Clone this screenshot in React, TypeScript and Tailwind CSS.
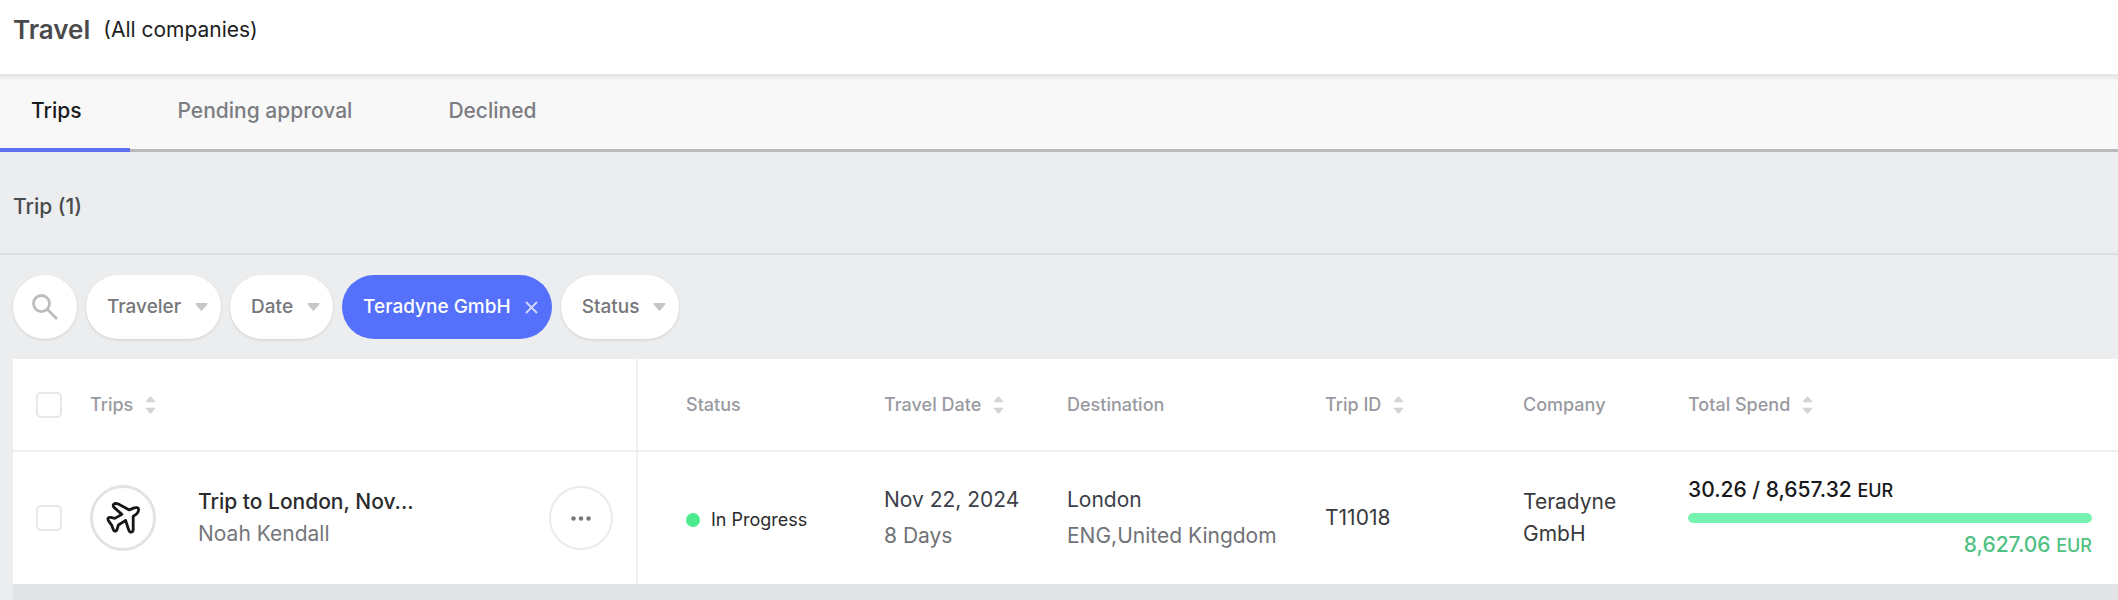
import { useState } from "react"
import type { ReactNode } from "react"
import clsx from "clsx"

interface Trip {
  id: string
  title: string
  traveler: string
  status: string
  date: string
  duration: string
  city: string
  region: string
  company: string
  spent: string
  budget: string
  remaining: string
  currency: string
  remainingPercent: number
}

const tabs = ["Trips", "Pending approval", "Declined"]

const columns = [
  { label: "Status", sortable: false },
  { label: "Travel Date", sortable: true },
  { label: "Destination", sortable: false },
  { label: "Trip ID", sortable: true },
  { label: "Company", sortable: false },
  { label: "Total Spend", sortable: true },
]

const trips: Trip[] = [
  {
    id: "T11018",
    title: "Trip to London, Nov...",
    traveler: "Noah Kendall",
    status: "In Progress",
    date: "Nov 22, 2024",
    duration: "8 Days",
    city: "London",
    region: "ENG,United Kingdom",
    company: "Teradyne GmbH",
    spent: "30.26",
    budget: "8,657.32",
    remaining: "8,627.06",
    currency: "EUR",
    remainingPercent: 100,
  },
]

function SortIcon() {
  return (
    <svg width="11" height="20" viewBox="0 0 12 20" fill="#d3d4d6" aria-hidden="true">
      <path d="M5 1.2a1.3 1.3 0 0 1 2 0l3.8 4.4c.5.6.1 1.4-.7 1.4H1.9c-.8 0-1.2-.8-.7-1.4z" />
      <path d="M5 18.8a1.3 1.3 0 0 0 2 0l3.8-4.4c.5-.6.1-1.4-.7-1.4H1.9c-.8 0-1.2.8-.7 1.4z" />
    </svg>
  )
}

function PlaneIcon() {
  return (
    <svg
      width="34"
      height="34"
      viewBox="0 0 34 34"
      fill="none"
      stroke="#161616"
      strokeWidth="2.8"
      strokeLinejoin="round"
      strokeLinecap="round"
      aria-hidden="true"
    >
      <path d="M12.3 3 23.3 8.9 28.2 6.9C30.6 6.2 32.6 6.4 32.6 8.4C32.6 11 30.6 13.4 27.2 15.2L27.2 28.4C27.2 31.6 23.6 32 22.8 29.2L19.6 19.4 12.4 24 10.9 28.8C10.2 30.8 8 30.6 7.4 28.8L5.8 24.4 2.4 19.6C1.2 17.4 2.4 16 4.6 16.4L8.8 17.4 15.9 13.4 8 6.4C5.8 4.2 8.2 1.4 12.3 3z" />
    </svg>
  )
}

function FilterChip({ children }: { children: ReactNode }) {
  return (
    <button
      type="button"
      className="flex h-16 items-center gap-[14px] rounded-full bg-white pr-[13px] pl-[21px] font-medium text-[#76777a] shadow-[0_1px_3px_rgba(0,0,0,0.12)]"
    >
      {children}
      <svg width="13" height="8" viewBox="0 0 14 9" fill="#c5c6c8" aria-hidden="true">
        <path d="M1.2 0h11.6c.9 0 1.3 1 .7 1.7L8 8.1a1.3 1.3 0 0 1-2 0L.5 1.7C-.1 1 .3 0 1.2 0z" />
      </svg>
    </button>
  )
}

function Checkbox({ label }: { label: string }) {
  return (
    <input
      type="checkbox"
      aria-label={label}
      className="size-[26px] shrink-0 appearance-none rounded-[5px] border-2 border-[#e6e7e8] bg-white checked:bg-[#5770ff]"
    />
  )
}

function TripRow({ trip }: { trip: Trip }) {
  return (
    <tr className="h-[133px] bg-white">
      <td className="border-r-2 border-[#efeff0]">
        <div className="flex items-center px-[23px]">
          <Checkbox label={`Select ${trip.title}`} />
          <span className="ml-7 flex size-[66px] shrink-0 items-center justify-center rounded-full border-3 border-[#e3e3e4]">
            <PlaneIcon />
          </span>
          <div className="ml-[42px] flex-1 leading-8">
            <p className="font-medium text-[#2b2b2d]">{trip.title}</p>
            <p className="text-[#76777b]">{trip.traveler}</p>
          </div>
          <button
            type="button"
            aria-label="More actions"
            className="flex size-16 items-center justify-center rounded-full border-2 border-[#ebebec]"
          >
            <svg width="20" height="5" viewBox="0 0 20 5" fill="#76777a" aria-hidden="true">
              <circle cx="2.5" cy="2.5" r="2.2" />
              <circle cx="10" cy="2.5" r="2.2" />
              <circle cx="17.5" cy="2.5" r="2.2" />
            </svg>
          </button>
        </div>
      </td>
      <td className="pl-12">
        <div className="flex items-center gap-[11px] pt-1 text-lg text-[#2b2b2d]">
          <span className="size-[14px] rounded-full bg-[#4cec8c]" />
          {trip.status}
        </div>
      </td>
      <td className="pl-12 leading-9 whitespace-nowrap">
        <p className="text-[#3c3f4a]">{trip.date}</p>
        <p className="text-[#707276]">{trip.duration}</p>
      </td>
      <td className="pl-12 leading-9 whitespace-nowrap">
        <p className="text-[#3c3f4a]">{trip.city}</p>
        <p className="text-[#707276]">{trip.region}</p>
      </td>
      <td className="pl-12 text-[#3a3a3d]">{trip.id}</td>
      <td className="pl-12 leading-8 text-[#3a3a3d]">{trip.company}</td>
      <td className="pr-[26px] pl-12 font-medium">
        <p className="leading-7 text-[#18181a]">
          {trip.spent} / {trip.budget} <span className="text-lg leading-7">{trip.currency}</span>
        </p>
        <div className="my-2 h-[10px] overflow-hidden rounded-full bg-[#e5e7e9]">
          <div className="h-full rounded-full bg-[#76f3b0]" style={{ width: `${trip.remainingPercent}%` }} />
        </div>
        <p className="text-right leading-7 text-[#4fc183]">
          {trip.remaining} <span className="text-lg leading-7">{trip.currency}</span>
        </p>
      </td>
    </tr>
  )
}

export default function App() {
  const [activeTab, setActiveTab] = useState("Trips")

  return (
    <div className="min-h-screen bg-[#ebedef] font-['Inter',sans-serif] text-[21px]">
      <header className="flex h-[74px] items-start gap-[13px] bg-white px-[13px] pt-3">
        <h1 className="text-[26px] leading-9 font-semibold text-[#4a4a4c]">Travel</h1>
        <span className="leading-9 text-[#1d1d1f]">(All companies)</span>
      </header>

      <nav className="flex h-[78px] gap-12 border-b-3 border-[#b9babd] bg-[#f8f8f9] shadow-[inset_0_6px_4px_-2px_rgba(0,0,0,0.08)]">
        {tabs.map((tab) => (
          <button
            key={tab}
            type="button"
            onClick={() => setActiveTab(tab)}
            className={clsx(
              "-mb-[3px] border-b-4 pr-12 font-medium first:pl-[31px]",
              tab === activeTab ? "border-[#5f70ee] text-[#1b1b1d]" : "border-transparent text-[#7c7d81]"
            )}
          >
            {tab}
          </button>
        ))}
      </nav>

      <div className="flex h-[103px] items-center border-b-2 border-[#dcdee0] px-[13px]">
        <h2 className="pt-2 font-medium text-[#4a4b4d]">Trip (1)</h2>
      </div>

      <div className="flex gap-[9px] px-[13px] py-5 text-[19px]">
        <button
          type="button"
          aria-label="Search"
          className="flex size-16 items-center justify-center rounded-full bg-white shadow-[0_1px_3px_rgba(0,0,0,0.12)]"
        >
          <svg width="28" height="28" viewBox="0 0 28 28" fill="none" stroke="#bdbdbf" strokeWidth="2.8" aria-hidden="true">
            <circle cx="10.5" cy="10.5" r="8" />
            <path d="m16.5 16.5 9.5 9.5" />
          </svg>
        </button>
        <FilterChip>Traveler</FilterChip>
        <FilterChip>Date</FilterChip>
        <button
          type="button"
          className="flex h-16 items-center gap-[14px] rounded-full bg-[#5570fb] pr-[14px] pl-[21px] font-medium text-white"
        >
          Teradyne GmbH
          <svg width="13" height="13" viewBox="0 0 13 13" stroke="#cfd6ff" strokeWidth="2" aria-hidden="true">
            <path d="m1 1 11 11M12 1 1 12" />
          </svg>
        </button>
        <FilterChip>Status</FilterChip>
      </div>

      <div className="ml-[13px] min-h-[242px] bg-[#e2e4e6]">
        <table className="w-full table-fixed border-collapse text-left">
          <colgroup>
            <col className="w-[624px]" />
            <col className="w-[199px]" />
            <col className="w-[183px]" />
            <col className="w-[258px]" />
            <col className="w-[198px]" />
            <col className="w-[165px]" />
            <col />
          </colgroup>
          <thead>
            <tr className="h-[92px] border-b-2 border-[#efeff0] bg-white text-lg text-[#999a9f]">
              <th scope="col" className="border-r-2 border-[#efeff0] font-medium">
                <div className="flex items-center pl-[23px]">
                  <Checkbox label="Select all trips" />
                  <button type="button" className="ml-7 flex items-center gap-3">
                    Trips
                    <SortIcon />
                  </button>
                </div>
              </th>
              {columns.map(({ label, sortable }) => (
                <th key={label} scope="col" className="pl-12 font-medium">
                  {sortable ? (
                    <button type="button" className="flex items-center gap-3 whitespace-nowrap">
                      {label}
                      <SortIcon />
                    </button>
                  ) : (
                    label
                  )}
                </th>
              ))}
            </tr>
          </thead>
          <tbody>
            {trips.map((trip) => (
              <TripRow key={trip.id} trip={trip} />
            ))}
          </tbody>
        </table>
      </div>
    </div>
  )
}
